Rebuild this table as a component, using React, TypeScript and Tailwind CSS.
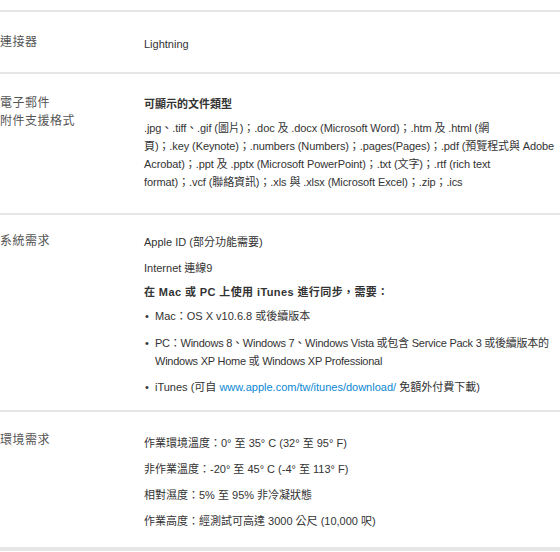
import React from "react";

const BODY_FONT = "font-['Liberation_Sans','Noto_Sans_CJK_TC',sans-serif]";
const LABEL_FONT = "font-['Noto_Sans_CJK_TC','Liberation_Sans',sans-serif]";

const Label = ({ lines, className = "" }: { lines: string[]; className?: string }) => (
  <div className={`w-[144px] shrink-0 text-[12px] leading-[18px] tracking-[0.5px] text-[#555] ${LABEL_FONT} ${className}`}>
    {lines.map((l) => (
      <div key={l}>{l}</div>
    ))}
  </div>
);

const Row = ({ children, className = "" }: { children: React.ReactNode; className?: string }) => (
  <div className={`flex border-t-2 border-[#e6e6e6] ${className}`}>{children}</div>
);

const Bullet = ({ children }: { children: React.ReactNode }) => (
  <li className="flex">
    <span className="w-[11px] shrink-0 pl-[1px]">•</span>
    <div>{children}</div>
  </li>
);

export default function App() {
  return (
    <div className={`w-[560px] h-[552px] bg-white overflow-hidden pt-[10px] text-[11px] leading-[18px] text-[#333] ${BODY_FONT}`}>
      {/* Connector */}
      <Row className="h-[62px] pt-[20px]">
        <Label lines={["連接器"]} />
        <div className="mt-[3px]">Lightning</div>
      </Row>

      {/* Mail attachments */}
      <Row className="h-[141px] pt-[19px]">
        <Label lines={["電子郵件", "附件支援格式"]} />
        <div className="mt-[2px]">
          <p className="font-bold">可顯示的文件類型</p>
          <p className="mt-[6px] whitespace-nowrap tracking-[-0.1px]">
            .jpg、.tiff、.gif (圖片)；.doc 及 .docx (Microsoft Word)；.htm 及 .html (網
            <br />
            頁)；.key (Keynote)；.numbers (Numbers)；.pages(Pages)；.pdf (預覽程式與 Adobe
            <br />
            Acrobat)；.ppt 及 .pptx (Microsoft PowerPoint)；.txt (文字)；.rtf (rich text
            <br />
            format)；.vcf (聯絡資訊)；.xls 與 .xlsx (Microsoft Excel)；.zip；.ics
          </p>
        </div>
      </Row>

      {/* System requirements */}
      <Row className="h-[197px] pt-[16px]">
        <Label lines={["系統需求"]} />
        <div className="mt-[2px]">
          <p>Apple ID (部分功能需要)</p>
          <p className="mt-[8px]">Internet 連線9</p>
          <p className="mt-[6px] font-bold tracking-[0.4px]">在 Mac 或 PC 上使用 iTunes 進行同步，需要：</p>
          <ul className="mt-[6px]">
            <Bullet>Mac：OS X v10.6.8 或後續版本</Bullet>
            <li className="mt-[9px] flex">
              <span className="w-[11px] shrink-0 pl-[1px]">•</span>
              <div className="whitespace-nowrap tracking-[-0.25px]">
                PC：Windows 8、Windows 7、Windows Vista 或包含 Service Pack 3 或後續版本的
                <br />
                Windows XP Home 或 Windows XP Professional
              </div>
            </li>
            <li className="mt-[8px] flex">
              <span className="w-[11px] shrink-0 pl-[1px]">•</span>
              <div>
                iTunes (可自 <a className="text-[#0b87d4]">www.apple.com/tw/itunes/download/</a> 免額外付費下載)
              </div>
            </li>
          </ul>
        </div>
      </Row>

      {/* Environment */}
      <Row className="h-[137px] pt-[18px]">
        <Label lines={["環境需求"]} />
        <div className="mt-[4px] flex flex-col gap-[8px]">
          <p>作業環境溫度：0° 至 35° C (32° 至 95° F)</p>
          <p>非作業溫度：-20° 至 45° C (-4° 至 113° F)</p>
          <p>相對濕度：5% 至 95% 非冷凝狀態</p>
          <p>作業高度：經測試可高達 3000 公尺 (10,000 呎)</p>
        </div>
      </Row>
      <div className="h-[4px] bg-[#e6e6e6]" />
    </div>
  );
}
